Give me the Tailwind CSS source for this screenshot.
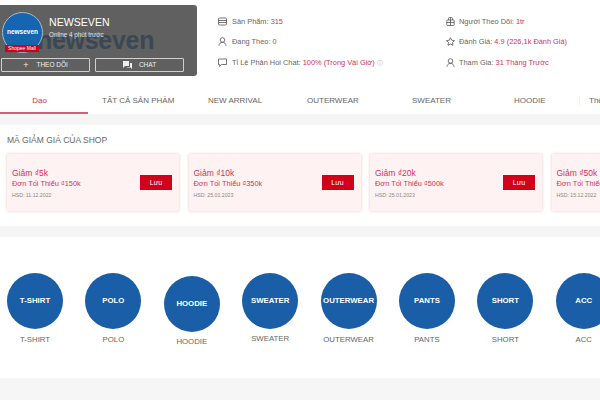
<!DOCTYPE html>
<html lang="en">
<head>
  <meta charset="UTF-8">
  <title>NEWSEVEN Shop</title>
  <meta name="viewport" content="width=device-width, initial-scale=1.0">
  <script src="https://cdn.jsdelivr.net/npm/@tailwindcss/browser@4"></script>
</head>
<body class="w-[600px] h-[400px] overflow-hidden bg-white text-[#666] font-['Liberation_Sans',Arial,sans-serif]">

  <!-- shop header -->
  <div class="flex items-start h-[88px] pt-[5px]">
    <div class="relative w-[197px] h-[71px] rounded-r-[3px] bg-[#606060] overflow-hidden shrink-0">
      <div class="absolute left-[37px] top-[20px] text-[#3a4853] text-[25px] leading-[30px] font-bold tracking-[-0.3px]">newseven</div>
      <div class="relative flex h-[48px]">
        <div class="relative w-[41px] h-[41px] ml-[2px] mt-[7px] rounded-full bg-[#1565b0] border border-[#a9bcc2] flex items-center justify-center shrink-0">
          <span class="text-white text-[6.500px] font-bold mt-[-1px]">newseven</span>
          <span class="absolute left-[2px] top-[32px] w-[34px] h-[7px] bg-[#d0011b] text-white text-[5px] leading-[7px] text-center whitespace-nowrap">Shopee Mall</span>
        </div>
        <div class="ml-[6px] pt-[10px]">
          <div class="text-white text-[10.600px] leading-[14px]">NEWSEVEN</div>
          <div class="text-[#e4e4e4] text-[6.300px] leading-[8px] mt-[2px]">Online 4 phút trước</div>
        </div>
      </div>
      <div class="relative flex gap-[5px] pl-[1px] mt-[5px]">
        <div class="w-[89px] h-[14px] border border-[#cfcfcf] rounded-[1px] flex items-center justify-center gap-[8px] text-[#eee] text-[6.500px]">
          <span class="text-[9px] leading-[9px]">+</span><span>THEO DÕI</span>
        </div>
        <div class="w-[89px] h-[14px] border border-[#cfcfcf] rounded-[1px] flex items-center justify-center gap-[7px] text-[#eee] text-[6.500px]">
          <svg width="9" height="8" viewBox="0 0 9 8"><path d="M0 0h6v5H2L0 7z" fill="#eee"/><path d="M7 2h2v6L7.500 6.500H4V6h3z" fill="#eee"/></svg>
          <span>CHAT</span>
        </div>
      </div>
    </div>

    <div class="grid grid-cols-[228px_1fr] gap-y-[9.700px] pl-[21px] pt-[10.500px] text-[7.400px] leading-[11px] text-[#666] whitespace-nowrap">
      <div class="flex items-center gap-[5px]">
        <svg class="w-[9px] h-[9px]" viewBox="0 0 9 9" fill="none" stroke="#555" stroke-width=".8"><rect x=".5" y="1" width="8" height="7" rx="1"/><path d="M.5 3.500h8M.5 5.500h8"/></svg>
        <span>Sản Phẩm: <span class="text-[#d0325a]">315</span></span>
      </div>
      <div class="flex items-center gap-[4px]">
        <svg class="w-[9px] h-[9px]" viewBox="0 0 9 9" fill="none" stroke="#555" stroke-width=".8"><rect x=".8" y="3" width="7.400" height="5.500" rx=".8"/><path d="M2.500 3V1.500a1 1 0 0 1 1-1h2a1 1 0 0 1 1 1V3M4.500 .5v8M.8 5.500h7.400"/></svg>
        <span>Người Theo Dõi: <span class="text-[#d0325a]">1tr</span></span>
      </div>
      <div class="flex items-center gap-[5px]">
        <svg class="w-[9px] h-[9px]" viewBox="0 0 9 9" fill="none" stroke="#555" stroke-width=".8"><circle cx="4.500" cy="3" r="2.300"/><path d="M1 8.800c0-2 1.500-3.500 3.500-3.500S8 6.800 8 8.800"/></svg>
        <span>Đang Theo: <span class="text-[#d0325a]">0</span></span>
      </div>
      <div class="flex items-center gap-[4px]">
        <svg class="w-[9px] h-[9px]" viewBox="0 0 9 9" fill="none" stroke="#555" stroke-width=".8"><path d="M4.500 .7l1.200 2.500 2.800.4-2 1.900.5 2.800-2.500-1.300L2 8.300l.5-2.800-2-1.900 2.800-.4z"/></svg>
        <span>Đánh Giá: <span class="text-[#d0325a]">4.9 (226,1k Đánh Giá)</span></span>
      </div>
      <div class="flex items-center gap-[5px]">
        <svg class="w-[9px] h-[9px]" viewBox="0 0 9 9" fill="none" stroke="#555" stroke-width=".8"><path d="M.5 1h8v5.500H3.500L1.500 8.300V6.500h-1z"/></svg>
        <span>Tỉ Lệ Phản Hồi Chat: <span class="text-[#d0325a]">100% (Trong Vài Giờ)</span> <span class="text-[#999] text-[6px]">ⓘ</span></span>
      </div>
      <div class="flex items-center gap-[4px]">
        <svg class="w-[9px] h-[9px]" viewBox="0 0 9 9" fill="none" stroke="#555" stroke-width=".8"><circle cx="4.500" cy="3" r="2.300"/><path d="M1 8.800c0-2 1.500-3.500 3.500-3.500S8 6.800 8 8.800"/></svg>
        <span>Tham Gia: <span class="text-[#d0325a]">31 Tháng Trước</span></span>
      </div>
    </div>
  </div>

  <!-- tabs -->
  <div class="relative h-[26px] text-[8px] leading-[25px] text-[#666] whitespace-nowrap">
    <div class="absolute left-0 top-0 w-[79px] text-center text-[#d0325a]">Dạo</div>
    <div class="absolute left-0 bottom-0 w-[88px] h-[2px] bg-[#d0607a]"></div>
    <div class="absolute left-[102px] top-0">TẤT CẢ SẢN PHẨM</div>
    <div class="absolute left-[208px] top-0">NEW ARRIVAL</div>
    <div class="absolute left-[307px] top-0">OUTERWEAR</div>
    <div class="absolute left-[412px] top-0">SWEATER</div>
    <div class="absolute left-[514px] top-0">HOODIE</div>
    <div class="absolute left-[579px] top-[8px] w-px h-[9px] bg-[#eee]"></div>
    <div class="absolute left-[589px] top-0">Thêm</div>
  </div>

  <!-- vouchers -->
  <div class="bg-[#f5f5f5] py-[11px]">
    <div class="bg-white h-[101px] pt-[10px] overflow-hidden">
      <div class="pl-[7px] text-[8.500px] leading-[11px] text-[#666]">MÃ GIẢM GIÁ CỦA SHOP</div>
      <div class="flex gap-[9.500px] pl-[7px] mt-[8px] w-[800px]">
        <div class="w-[172px] h-[57px] bg-[#fff2f2] shadow-[0_0_3px_rgba(200,120,120,0.4)] flex items-center justify-between pl-[5px] pr-[7px] shrink-0">
          <div class="text-[#d0325a]">
            <div class="text-[8.500px] leading-[11px]">Giảm ₫5k</div>
            <div class="text-[7.400px] leading-[9px]">Đơn Tối Thiểu ₫150k</div>
            <div class="text-[5.200px] leading-[6px] mt-[4px] text-[#888]">HSD: 11.12.2022</div>
          </div>
          <div class="w-[32px] h-[15px] bg-[#d0011b] text-white text-[7px] leading-[15px] text-center">Lưu</div>
        </div>
        <div class="w-[172px] h-[57px] bg-[#fff2f2] shadow-[0_0_3px_rgba(200,120,120,0.4)] flex items-center justify-between pl-[5px] pr-[7px] shrink-0">
          <div class="text-[#d0325a]">
            <div class="text-[8.500px] leading-[11px]">Giảm ₫10k</div>
            <div class="text-[7.400px] leading-[9px]">Đơn Tối Thiểu ₫350k</div>
            <div class="text-[5.200px] leading-[6px] mt-[4px] text-[#888]">HSD: 25.01.2023</div>
          </div>
          <div class="w-[32px] h-[15px] bg-[#d0011b] text-white text-[7px] leading-[15px] text-center">Lưu</div>
        </div>
        <div class="w-[172px] h-[57px] bg-[#fff2f2] shadow-[0_0_3px_rgba(200,120,120,0.4)] flex items-center justify-between pl-[5px] pr-[7px] shrink-0">
          <div class="text-[#d0325a]">
            <div class="text-[8.500px] leading-[11px]">Giảm ₫20k</div>
            <div class="text-[7.400px] leading-[9px]">Đơn Tối Thiểu ₫500k</div>
            <div class="text-[5.200px] leading-[6px] mt-[4px] text-[#888]">HSD: 25.01.2023</div>
          </div>
          <div class="w-[32px] h-[15px] bg-[#d0011b] text-white text-[7px] leading-[15px] text-center">Lưu</div>
        </div>
        <div class="w-[172px] h-[57px] bg-[#fff2f2] shadow-[0_0_3px_rgba(200,120,120,0.4)] flex items-center justify-between pl-[5px] pr-[7px] shrink-0">
          <div class="text-[#d0325a]">
            <div class="text-[8.500px] leading-[11px]">Giảm ₫50k</div>
            <div class="text-[7.400px] leading-[9px]">Đơn Tối Thiểu ₫1tr</div>
            <div class="text-[5.200px] leading-[6px] mt-[4px] text-[#888]">HSD: 15.12.2022</div>
          </div>
          <div class="w-[32px] h-[15px] bg-[#d0011b] text-white text-[7px] leading-[15px] text-center">Lưu</div>
        </div>
      </div>
    </div>
  </div>

  <!-- categories -->
  <div class="bg-white h-[141px] pt-[36px] flex gap-[22.400px] pl-[7px] w-[700px]">
    <div class="w-[56px] shrink-0 flex flex-col items-center">
      <div class="w-[56px] h-[56px] rounded-full bg-[#1a5ea8] text-white text-[7.800px] font-bold flex items-center justify-center">T-SHIRT</div>
      <div class="text-[7.800px] leading-[10px] mt-[6px]">T-SHIRT</div>
    </div>
    <div class="w-[56px] shrink-0 flex flex-col items-center">
      <div class="w-[56px] h-[56px] rounded-full bg-[#1a5ea8] text-white text-[7.800px] font-bold flex items-center justify-center">POLO</div>
      <div class="text-[7.800px] leading-[10px] mt-[6px]">POLO</div>
    </div>
    <div class="w-[56px] shrink-0 flex flex-col items-center mt-[3px]">
      <div class="w-[56px] h-[56px] rounded-full bg-[#1a5ea8] text-white text-[7.800px] font-bold flex items-center justify-center">HOODIE</div>
      <div class="text-[7.800px] leading-[10px] mt-[5px]">HOODIE</div>
    </div>
    <div class="w-[56px] shrink-0 flex flex-col items-center">
      <div class="w-[56px] h-[56px] rounded-full bg-[#1a5ea8] text-white text-[7.800px] font-bold flex items-center justify-center">SWEATER</div>
      <div class="text-[7.800px] leading-[10px] mt-[5px]">SWEATER</div>
    </div>
    <div class="w-[56px] shrink-0 flex flex-col items-center">
      <div class="w-[56px] h-[56px] rounded-full bg-[#1a5ea8] text-white text-[7.800px] font-bold flex items-center justify-center">OUTERWEAR</div>
      <div class="text-[7.800px] leading-[10px] mt-[6px]">OUTERWEAR</div>
    </div>
    <div class="w-[56px] shrink-0 flex flex-col items-center">
      <div class="w-[56px] h-[56px] rounded-full bg-[#1a5ea8] text-white text-[7.800px] font-bold flex items-center justify-center">PANTS</div>
      <div class="text-[7.800px] leading-[10px] mt-[6px]">PANTS</div>
    </div>
    <div class="w-[56px] shrink-0 flex flex-col items-center">
      <div class="w-[56px] h-[56px] rounded-full bg-[#1a5ea8] text-white text-[7.800px] font-bold flex items-center justify-center">SHORT</div>
      <div class="text-[7.800px] leading-[10px] mt-[6px]">SHORT</div>
    </div>
    <div class="w-[56px] shrink-0 flex flex-col items-center">
      <div class="w-[56px] h-[56px] rounded-full bg-[#1a5ea8] text-white text-[7.800px] font-bold flex items-center justify-center">ACC</div>
      <div class="text-[7.800px] leading-[10px] mt-[6px]">ACC</div>
    </div>
  </div>
  <div class="h-[22px] bg-[#f6f6f6]"></div>
</body>
</html>
